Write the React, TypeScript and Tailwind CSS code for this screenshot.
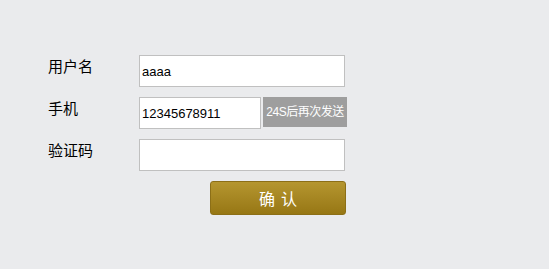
import React from "react";

export default function App() {
  return (
    <div className="w-[549px] h-[269px] bg-[#eaebed] pt-[55px] pl-[48px] text-black">
      <div className="flex flex-col gap-[10px]">
        <div className="flex">
          <div className="w-[91px] text-[15px] leading-[22px] font-['Noto_Sans_CJK_SC',sans-serif]">用户名</div>
          <input
            readOnly
            value="aaaa"
            className="w-[206px] h-[32px] border border-[#c0c0c0] bg-white px-[2px] text-[13px] outline-none font-['Liberation_Sans',Arial,sans-serif]"
          />
        </div>
        <div className="flex">
          <div className="w-[91px] text-[15px] leading-[22px] font-['Noto_Sans_CJK_SC',sans-serif]">手机</div>
          <input
            readOnly
            value="12345678911"
            className="w-[122px] h-[32px] border border-[#c0c0c0] bg-white px-[2px] text-[13px] outline-none font-['Liberation_Sans',Arial,sans-serif]"
          />
          <div className="ml-[2px] w-[84px] h-[30px] bg-[#9e9e9e] text-white text-[12px] tracking-[-0.5px] flex items-center justify-center whitespace-nowrap font-['Liberation_Sans','Noto_Sans_CJK_SC',sans-serif]">
            24S后再次发送
          </div>
        </div>
        <div className="flex">
          <div className="w-[91px] text-[15px] leading-[22px] font-['Noto_Sans_CJK_SC',sans-serif]">验证码</div>
          <input
            readOnly
            value=""
            className="w-[206px] h-[32px] border border-[#c0c0c0] bg-white px-[2px] text-[13px] outline-none font-['Liberation_Sans',Arial,sans-serif]"
          />
        </div>
        <div className="flex pl-[162px]">
          <div className="w-[136px] h-[34px] rounded-[3px] border border-[#8c6f17] bg-gradient-to-b from-[#b5962f] to-[#977714] text-white text-[16px] flex items-center justify-center gap-[6px] font-['Noto_Sans_CJK_SC',sans-serif]">
            <span>确</span>
            <span>认</span>
          </div>
        </div>
      </div>
    </div>
  );
}
